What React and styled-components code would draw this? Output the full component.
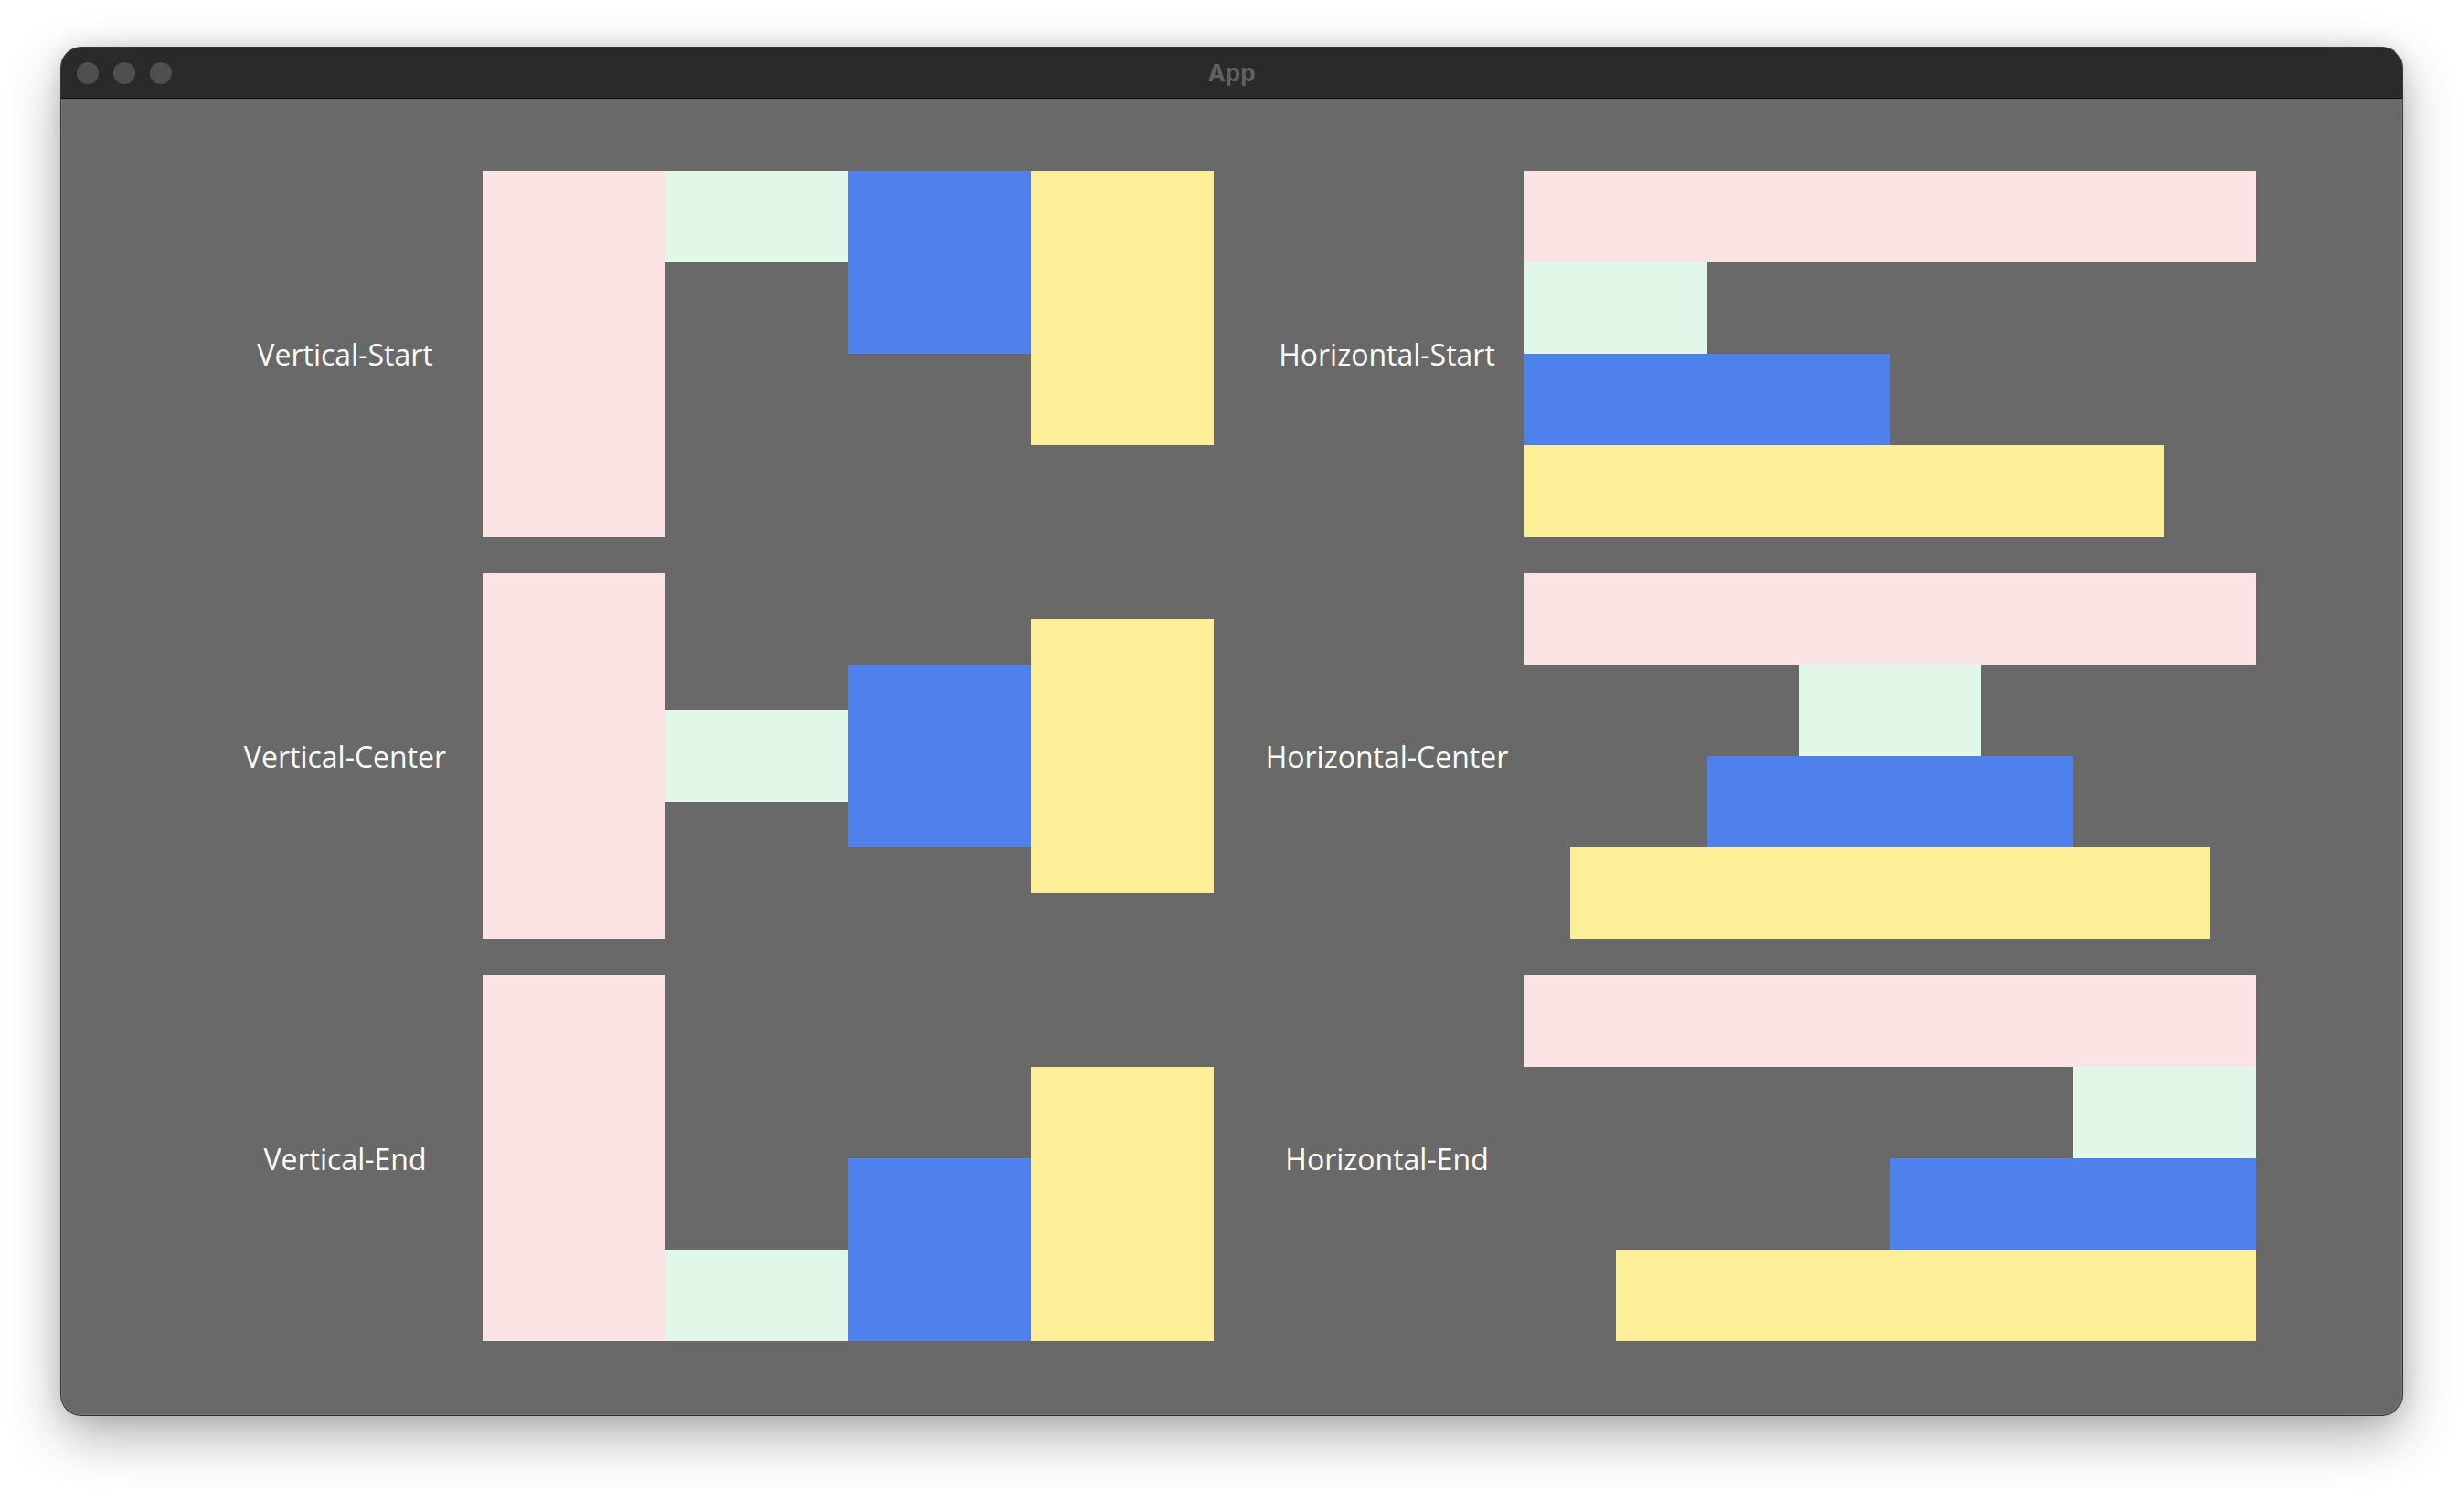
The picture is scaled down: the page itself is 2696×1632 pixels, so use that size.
import React from 'react'
import styled, { createGlobalStyle } from "styled-components";

const GlobalStyle = createGlobalStyle`
  html, body {
    margin: 0;
    padding: 0;
    background: #ffffff;
  }
  body {
    font-family: "Open Sans", "Noto Sans", sans-serif;
  }
`

const Page = styled.div`
  width: 2696px;
  height: 1632px;
  box-sizing: border-box;
  padding: 52px 68px 84px 67px;
  display: flex;
`

const Window = styled.div`
  flex: 1;
  display: flex;
  flex-direction: column;
  border-radius: 22px;
  overflow: hidden;
  background: #696969;
  box-shadow: 0 0 0 1px rgba(0, 0, 0, 0.75), inset 0 0 0 1px rgba(255, 255, 255, 0.12),
    0 22px 60px rgba(0, 0, 0, 0.32), 0 0 24px rgba(0, 0, 0, 0.12);
`

const TitleBar = styled.div`
  position: relative;
  height: 55px;
  flex-shrink: 0;
  background: #292a29;
  border-bottom: 1px solid #0e0e0e;
  box-shadow: inset 0 1px 0 rgba(255, 255, 255, 0.18);
  display: flex;
  align-items: center;
  justify-content: center;
`

const Lights = styled.div`
  position: absolute;
  left: 17px;
  top: 16px;
  display: flex;
  gap: 16px;
`

const Light = styled.span`
  width: 24px;
  height: 24px;
  border-radius: 50%;
  background: #4d504f;
`

const Title = styled.div`
  font-family: "Inter", "Liberation Sans", sans-serif;
  font-weight: 700;
  font-size: 26px;
  color: #5f605f;
  margin-top: 0px;
`

const Content = styled.div`
  flex: 1;
  display: flex;
  align-items: center;
  justify-content: center;
`

const Grid = styled.div`
  display: grid;
  grid-template-columns: repeat(2, auto);
  column-gap: 40px;
  row-gap: 40px;
  margin-top: -2px;
`

const Cell = styled.div`
  display: flex;
  align-items: center;
`

const Label = styled.div`
  width: 300px;
  text-align: center;
  color: #ffffff;
  font-size: 32px;
`

const Stage = styled.div`
  width: 800px;
  height: 400px;
  display: flex;
  flex-direction: ${(props) => (props.dir === "h" ? "column" : "row")};
  align-items: ${(props) => props.align};
`

const Block = styled.div`
  flex-shrink: 0;
  background: ${(props) => props.color};
  width: ${(props) => props.w}px;
  height: ${(props) => props.h}px;
`

const colors = ["#fbe3e3", "#e1f8e9", "#4e81eb", "#fdef98"]
const sizes = [400, 100, 200, 300]
const bars = [800, 200, 400, 700]

const rows = [
  { name: "Start", align: "flex-start" },
  { name: "Center", align: "center" },
  { name: "End", align: "flex-end" },
]

function App() {
  return (
    <>
      <GlobalStyle />
      <Page>
        <Window>
          <TitleBar>
            <Lights>
              <Light />
              <Light />
              <Light />
            </Lights>
            <Title>App</Title>
          </TitleBar>
          <Content>
            <Grid>
              {rows.map((row) => (
                <React.Fragment key={row.name}>
                  <Cell>
                    <Label>Vertical-{row.name}</Label>
                    <Stage dir="v" align={row.align}>
                      {colors.map((c, i) => (
                        <Block key={c} color={c} w={200} h={sizes[i]} />
                      ))}
                    </Stage>
                  </Cell>
                  <Cell>
                    <Label>Horizontal-{row.name}</Label>
                    <Stage dir="h" align={row.align}>
                      {colors.map((c, i) => (
                        <Block key={c} color={c} w={bars[i]} h={100} />
                      ))}
                    </Stage>
                  </Cell>
                </React.Fragment>
              ))}
            </Grid>
          </Content>
        </Window>
      </Page>
    </>
  )
}

export default App
